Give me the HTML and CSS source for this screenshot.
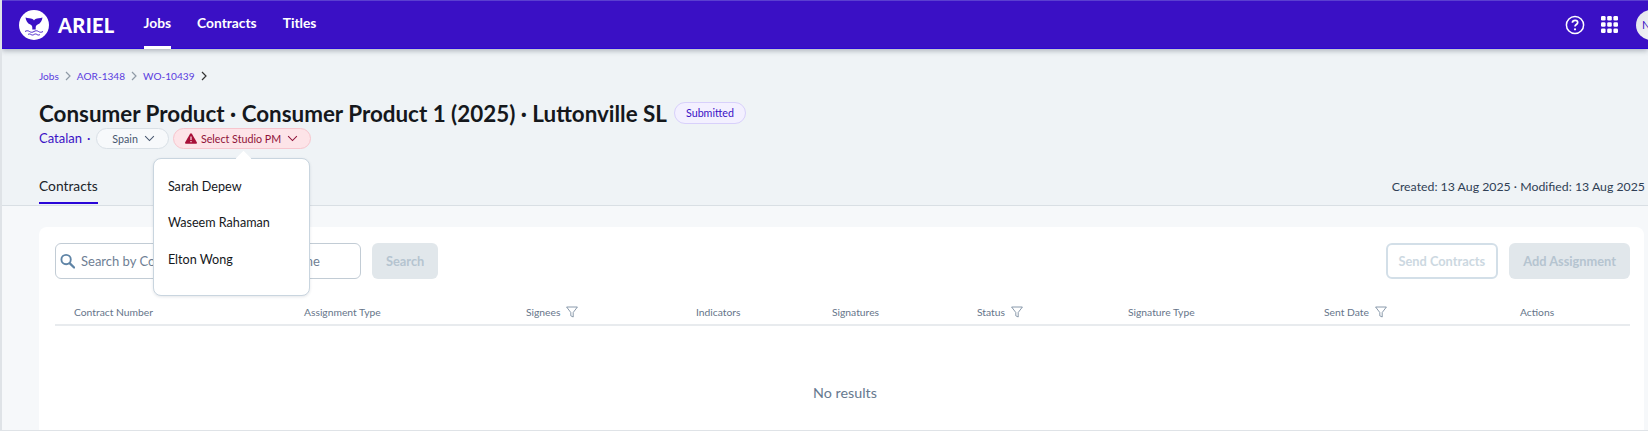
FILE: index.html
```html
<!DOCTYPE html>
<html lang="en">
<head>
<meta charset="utf-8">
<title>Ariel</title>
<link rel="stylesheet" href="styles.css">
</head>
<body>
<div class="app">
  <header class="nav">
    <div class="brand">
      <svg class="logo" viewBox="0 0 30 30"><circle cx="15" cy="15" r="15" fill="#fff"/><path d="M6.500 7.500c2.500.6 5 .8 7 1.600.9.4 1.300.9 1.500 1.300.2-.4.600-.9 1.500-1.300 2-.8 4.500-1 7-1.600-.4 3.300-2 6-4.800 7-1.300.5-2 1.500-2 3.300v1.700h-3.400v-1.700c0-1.800-.7-2.800-2-3.300-2.800-1-4.400-3.700-4.800-7z" fill="#3a10c5"/><path d="M6 21.500c1.500-1 3-1 4.500 0s3 1 4.500 0 3-1 4.500 0 3 1 4.500 0M9 24.500c1-.7 2-.7 3 0s2 .7 3 0 2-.7 3 0 2 .7 3 0" fill="none" stroke="#3a10c5" stroke-width=".9"/></svg>
      <span class="brand-name">ARIEL</span>
    </div>
    <nav class="nav-links">
      <a class="nav-link active">Jobs</a>
      <a class="nav-link">Contracts</a>
      <a class="nav-link">Titles</a>
    </nav>
    <div class="nav-right">
      <svg class="help" viewBox="0 0 20 20"><circle cx="10" cy="10" r="8.600" fill="none" stroke="#fff" stroke-width="1.500"/><path d="M7.400 7.800c0-1.500 1.100-2.500 2.700-2.500s2.600 1 2.600 2.200c0 2-2.700 2-2.700 4" fill="none" stroke="#fff" stroke-width="1.700"/><circle cx="10" cy="14.300" r="1.100" fill="#fff"/></svg>
      <svg class="apps" viewBox="0 0 17 17" fill="#fff"><rect width="4.600" height="4.600" rx="1.300"/><rect x="6.200" width="4.600" height="4.600" rx="1.300"/><rect x="12.400" width="4.600" height="4.600" rx="1.300"/><rect y="6.200" width="4.600" height="4.600" rx="1.300"/><rect x="6.200" y="6.200" width="4.600" height="4.600" rx="1.300"/><rect x="12.400" y="6.200" width="4.600" height="4.600" rx="1.300"/><rect y="12.400" width="4.600" height="4.600" rx="1.300"/><rect x="6.200" y="12.400" width="4.600" height="4.600" rx="1.300"/><rect x="12.400" y="12.400" width="4.600" height="4.600" rx="1.300"/></svg>
      <div class="avatar">N</div>
    </div>
  </header>

  <section class="head">
    <div class="crumbs">
      <a>Jobs</a><svg class="crumb-sep" viewBox="0 0 8 10"><path d="M2 1l4 4-4 4"/></svg>
      <a>AOR-1348</a><svg class="crumb-sep" viewBox="0 0 8 10"><path d="M2 1l4 4-4 4"/></svg>
      <a>WO-10439</a><svg class="crumb-sep dark" viewBox="0 0 8 10"><path d="M2 1l4 4-4 4"/></svg>
    </div>
    <div class="title-row">
      <h1 class="title">Consumer Product · Consumer Product 1 (2025) · Luttonville SL</h1>
      <span class="status">Submitted</span>
    </div>
    <div class="meta-row">
      <a class="lang">Catalan</a><span class="dot">·</span>
      <span class="pill">Spain<svg class="chev" viewBox="0 0 12 8"><path d="M1 1.300L6 6.300l5-5"/></svg></span>
      <div class="pm-wrap">
        <span class="pill danger"><svg class="warn" viewBox="0 0 12 11"><path d="M6 .3c.4 0 .7.2.9.5l4.900 8.400c.4.700-.1 1.500-.9 1.500H1.100c-.8 0-1.300-.8-.9-1.500L5.100.8c.2-.3.5-.5.9-.5z" fill="#a80f38"/><path d="M5.400 3.500h1.200v3.600H5.400zM5.400 8h1.200v1.200H5.400z" fill="#fde4e8"/></svg>Select Studio PM<svg class="chev" viewBox="0 0 12 8"><path d="M1 1.300L6 6.300l5-5"/></svg></span>
        <div class="menu">
          <div class="menu-item">Sarah Depew</div>
          <div class="menu-item">Waseem Rahaman</div>
          <div class="menu-item">Elton Wong</div>
        </div>
      </div>
    </div>
    <div class="tabs">
      <a class="tab">Contracts</a>
      <span class="dates">Created: 13 Aug 2025 · Modified: 13 Aug 2025</span>
    </div>
  </section>

  <main class="content">
    <div class="card">
      <div class="toolbar">
        <div class="search">
          <svg class="search-icon" viewBox="0 0 16 16"><circle cx="6.500" cy="6.500" r="5" fill="none" stroke="#5f84a6" stroke-width="2"/><path d="M10.500 10.500L15 15" stroke="#5f84a6" stroke-width="2.400" stroke-linecap="round"/></svg>
          <span class="search-text">Search by Contract Number, Signee Name</span>
        </div>
        <button class="btn solid">Search</button>
        <div class="spacer"></div>
        <button class="btn outline">Send Contracts</button>
        <button class="btn solid">Add Assignment</button>
      </div>
      <div class="thead">
        <div class="th">Contract Number</div>
        <div class="th">Assignment Type</div>
        <div class="th">Signees<svg class="filter" viewBox="0 0 12 12"><path d="M.6 1h10.800L7.200 6.500v4.500L4.800 9.800V6.500z"/></svg></div>
        <div class="th">Indicators</div>
        <div class="th">Signatures</div>
        <div class="th">Status<svg class="filter" viewBox="0 0 12 12"><path d="M.6 1h10.800L7.200 6.500v4.500L4.800 9.800V6.500z"/></svg></div>
        <div class="th">Signature Type</div>
        <div class="th">Sent Date<svg class="filter" viewBox="0 0 12 12"><path d="M.6 1h10.800L7.200 6.500v4.500L4.800 9.800V6.500z"/></svg></div>
        <div class="th">Actions</div>
      </div>
      <div class="empty">No results</div>
    </div>
  </main>
</div>
</body>
</html>
```
FILE: styles.css
```css
* { box-sizing: border-box; }
html, body { margin: 0; height: 100%; overflow: hidden; }
body { font-family: "Lato", "Open Sans", sans-serif; background: #dfe3e7; }
.app { margin-left: 2px; height: 430px; overflow: hidden; background: #f6f8fa; border-top: 1px solid #5b3fd0; }

.nav { height: 48px; background: #3a10c5; border-bottom: 1px solid #2a06d8; display: flex; align-items: center; padding-left: 17px; box-shadow: 0 2px 5px rgba(30,40,60,.3); position: relative; z-index: 2; }
.brand { display: flex; align-items: center; gap: 9px; }
.logo { width: 30px; height: 30px; display: block; }
.brand-name { color: #fff; font-family: "Lato", sans-serif; font-weight: 900; font-size: 20px; letter-spacing: .3px; }
.nav-links { display: flex; gap: 26px; margin-left: 29px; height: 100%; }
.nav-link { color: #fff; font-size: 13.800px; font-weight: 700; height: 48px; line-height: 44px; border-bottom: 3px solid transparent; }
.nav-link.active { border-bottom-color: #fff; margin-bottom: -1px; }
.nav-right { margin-left: auto; display: flex; align-items: center; flex-shrink: 0; margin-right: -18px; }
.help { width: 20px; height: 20px; }
.apps { width: 17px; height: 17px; margin-left: 16px; }
.avatar { width: 30px; height: 30px; margin-left: 18px; border-radius: 50%; background: linear-gradient(120deg, #e2e3ea, #fafafc); color: #3a10c5; font-size: 11px; display: flex; align-items: center; justify-content: flex-start; padding-left: 6px; }

.head { background: #eff3f6; border-bottom: 1px solid #d9dfe4; padding: 20px 3px 0 37px; height: 157px; }
.crumbs { display: flex; align-items: center; font-size: 10.100px; line-height: 14px; color: #5a3be0; }
.crumb-sep { width: 8px; height: 10px; margin: 0 5px; fill: none; stroke: #8f9aa6; stroke-width: 1.200; }
.crumb-sep.dark { stroke: #333; }
.title-row { display: flex; align-items: center; margin-top: 17px; height: 26px; }
.title { margin: 0; font-size: 22.400px; font-weight: 700; color: #15181c; white-space: nowrap; }
.status { margin-left: 7px; height: 22px; padding: 0 11px; border-radius: 11px; border: 1px solid #d8d0fb; background: #f3f0ff; color: #3a10c5; font-size: 10.700px; line-height: 20px; }
.meta-row { display: flex; align-items: center; margin-top: 1px; height: 22px; font-size: 13px; }
.lang { color: #3a10c5; }
.dot { margin: 0 6px 0 5px; color: #3a10c5; }
.pill { display: inline-flex; align-items: center; height: 21px; padding: 0 13px 0 15px; border-radius: 11px; border: 1px solid #d9e0e6; background: #f7f9fb; color: #46566e; font-size: 10.700px; }
.chev { width: 11px; height: 7px; margin-left: 6px; fill: none; stroke: currentColor; stroke-width: 1.200; }
.pm-wrap { position: relative; margin-left: 4px; }
.pill.danger { border-color: #f7c5cd; background: #fde4e8; color: #8f1238; padding: 0 12px 0 11px; }
.warn { width: 12px; height: 11px; margin-right: 4px; }
.menu { position: absolute; left: -20px; top: 30px; width: 157px; height: 138px; background: #fff; border: 1px solid #c9d5df; border-radius: 8px; padding: 10px 0 0 14px; box-shadow: 0 1px 3px rgba(40,60,80,.12); z-index: 3; }
.menu::before { content: ""; position: absolute; left: 84px; top: -6px; width: 11px; height: 11px; background: #fff; transform: rotate(45deg); }
.menu-item { height: 36.500px; line-height: 36px; font-size: 12.600px; color: #15181c; position: relative; }

.tabs { display: flex; align-items: flex-end; justify-content: space-between; margin-top: 13px; height: 41px; }
.tab { font-size: 13.800px; color: #20242a; border-bottom: 2px solid #2a06d8; height: 31px; line-height: 26px; width: 59px; margin-bottom: -1px; white-space: nowrap; }
.dates { font-size: 12.300px; color: #2f3f55; height: 28px; line-height: 24px; }

.content { padding: 21px 4px 0 37px; }
.card { background: #fff; border-radius: 8px; height: 220px; padding: 16px 14px 0 16px; }
.toolbar { display: flex; align-items: center; gap: 11px; height: 36px; }
.search { width: 306px; height: 36px; border: 1px solid #c2ccd5; border-radius: 6px; display: flex; align-items: center; padding-left: 4px; overflow: hidden; white-space: nowrap; }
.search-icon { width: 15px; height: 16px; margin-right: 6px; flex-shrink: 0; }
.search-text { font-size: 13px; color: #6f8094; }
.spacer { flex: 1; }
.btn { height: 36px; border-radius: 6px; font-family: inherit; font-size: 12.800px; font-weight: 700; padding: 0 14px; }
.btn.solid { border: none; background: #e1e7eb; color: #b5c4d0; }
.btn.outline { background: #fff; border: 2px solid #d3dfe8; color: #ccd8e1; padding: 0 11px; }
.thead { display: grid; grid-template-columns: 230px 222px 170px 136px 145px 151px 196px 196px 129px; margin-top: 16px; height: 31px; border-bottom: 2px solid #e8ebee; }
.th { padding-left: 19px; font-size: 10.300px; color: #66758a; display: flex; align-items: center; height: 33px; white-space: nowrap; }
.filter { width: 12px; height: 12px; margin-left: 6px; fill: none; stroke: #6d8197; stroke-width: .8; }
.empty { text-align: center; margin-top: 58px; padding-left: 5px; font-size: 14.300px; color: #66798f; }
```
